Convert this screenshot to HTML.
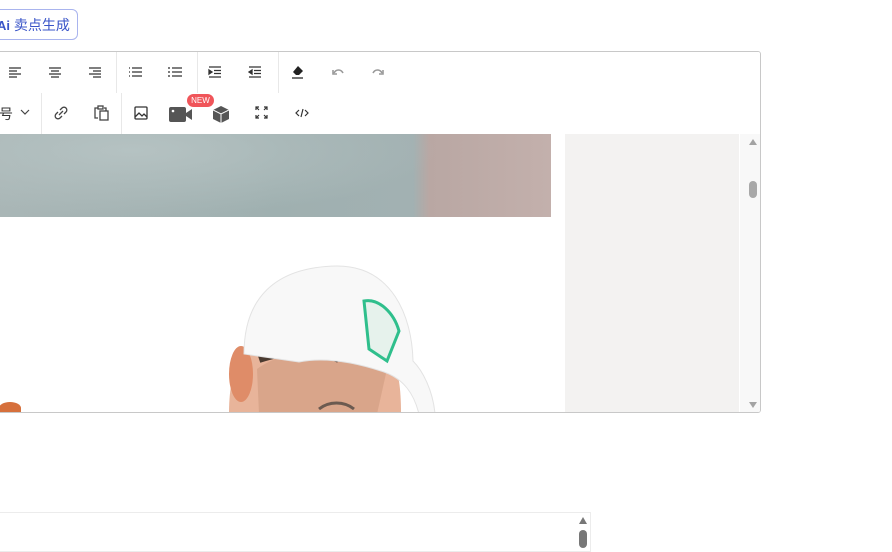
<!DOCTYPE html>
<html><head><meta charset="utf-8"><style>
body{margin:0;width:892px;height:548px;overflow:hidden;background:#fff;font-family:"Liberation Sans","Noto Sans CJK SC",sans-serif;position:relative}
.abs{position:absolute}
.btn{left:-12px;top:9px;width:90px;height:31px;border:1px solid #a9b4ee;border-radius:6px;color:#3a55c8;font-size:14px;line-height:31px;box-sizing:border-box;padding-left:8px;white-space:nowrap}
.ed{left:-2px;top:51px;width:763px;height:362px;border:1px solid #c8c8c8;box-sizing:border-box;border-radius:0 3px 3px 0;overflow:hidden}
.row{position:absolute;left:0;width:100%;height:41px;border-bottom:1px solid #ececec;background:#fff}
.sep{position:absolute;top:0;width:1px;height:41px;background:#e8e8e8}
.ic{position:absolute;top:13px}
</style></head><body>
<div class="abs btn"><b style="font-size:13px">Ai</b> 卖点生成</div>
<div class="abs ed">
 <div class="row" style="top:0">
  <svg class="ic" style="left:9px" width="14" height="14" viewBox="0 0 14 14" stroke="#333" stroke-width="1.3"><path d="M1 3h12M1 6h8M1 9h12M1 12h8"/></svg>
  <svg class="ic" style="left:49px" width="14" height="14" viewBox="0 0 14 14" stroke="#333" stroke-width="1.3"><path d="M1 3h12M3 6h8M1 9h12M3 12h8"/></svg>
  <svg class="ic" style="left:89px" width="14" height="14" viewBox="0 0 14 14" stroke="#333" stroke-width="1.3"><path d="M1 3h12M5 6h8M1 9h12M5 12h8"/></svg>
  <div class="sep" style="left:117px"></div>
  <svg class="ic" style="left:129px" width="14" height="14" viewBox="0 0 14 14" stroke="#333" stroke-width="1.3"><path d="M4 3h10M4 7h10M4 11h10M1 3h1M1 7h1M1 11h1"/></svg>
  <svg class="ic" style="left:169px" width="14" height="14" viewBox="0 0 14 14" stroke="#333" stroke-width="1.3"><path d="M4 3h10M4 7h10M4 11h10M1 2v2M1 6v2M1 10v2"/></svg>
  <div class="sep" style="left:198px"></div>
  <svg class="ic" style="left:209px" width="14" height="14" viewBox="0 0 14 14" stroke="#333" stroke-width="1.3"><path d="M1 2h12M6 5.5h7M6 8.5h7M1 12h12"/><path d="M1 5l3 2-3 2z" fill="#333"/></svg>
  <svg class="ic" style="left:249px" width="14" height="14" viewBox="0 0 14 14" stroke="#333" stroke-width="1.3"><path d="M1 2h12M6 5.5h7M6 8.5h7M1 12h12"/><path d="M4 5l-3 2 3 2z" fill="#333"/></svg>
  <div class="sep" style="left:279px"></div>
  <svg class="ic" style="left:292px" width="14" height="14" viewBox="0 0 14 14"><path d="M7 1l5 5-4 4H5L2 7z" fill="#222"/><path d="M1 13h11" stroke="#222" stroke-width="1.3"/></svg>
  <svg class="ic" style="left:332px" width="14" height="14" viewBox="0 0 14 14" fill="none" stroke="#999" stroke-width="1.6"><path d="M3 8c2-4 7-4 9 0"/><path d="M2 5v4h4" /></svg>
  <svg class="ic" style="left:372px" width="14" height="14" viewBox="0 0 14 14" fill="none" stroke="#999" stroke-width="1.6"><path d="M11 8c-2-4-7-4-9 0"/><path d="M12 5v4H8"/></svg>
 </div>
 <div class="row" style="top:41px">
  <div class="abs" style="left:0;top:11px;font-size:14px;color:#333">号</div>
  <svg class="ic" style="left:21px;top:15px" width="10" height="8" viewBox="0 0 10 8" fill="none" stroke="#444" stroke-width="1.2"><path d="M1 2l4 4 4-4"/></svg>
  <div class="sep" style="left:42px"></div>
  <svg class="ic" style="left:55px" width="14" height="14" viewBox="0 0 14 14" fill="none" stroke="#444" stroke-width="1.3"><path d="M6 4l2-2a2.5 2.5 0 0 1 4 4l-2 2M8 10l-2 2a2.5 2.5 0 0 1-4-4l2-2M5 9l4-4"/></svg>
  <svg class="ic" style="left:95px;top:12px" width="16" height="16" viewBox="0 0 16 16" fill="none" stroke="#444" stroke-width="1.3"><path d="M4 13H1V3h3M10 3h2v3"/><rect x="4" y="1" width="5" height="3"/><rect x="6" y="6" width="8" height="9"/></svg>
  <div class="sep" style="left:122px"></div>
  <svg class="ic" style="left:135px" width="14" height="14" viewBox="0 0 14 14" fill="none" stroke="#333" stroke-width="1.3"><rect x="1" y="1" width="12" height="12" rx="1"/><path d="M1 11l4-4 3 3 2-2 3 3"/></svg>
  <svg class="ic" style="left:170px;top:14px" width="24" height="15" viewBox="0 0 24 15"><rect x="0" y="0" width="17" height="15" rx="2" fill="#555"/><path d="M17 6l6-4v11l-6-4z" fill="#555"/><circle cx="4" cy="4" r="1.3" fill="#fff"/></svg>
  <div class="abs" style="left:188px;top:1px;width:27px;height:13px;border-radius:7px;background:#f0555a;color:#fff;font-size:8px;line-height:13px;text-align:center">NEW</div>
  <svg class="ic" style="left:214px;top:13px" width="16" height="17" viewBox="0 0 16 17"><path d="M8 0l8 4v9l-8 4-8-4V4z" fill="#555"/><path d="M0 4l8 4 8-4M8 8v9" stroke="#fff" stroke-width="1" fill="none"/></svg>
  <svg class="ic" style="left:256px" width="13" height="13" viewBox="0 0 13 13" fill="none" stroke="#333" stroke-width="1.2"><path d="M1 4V1h3M1 1l3 3M12 4V1H9M12 1L9 4M1 9v3h3M1 12l3-3M12 9v3H9M12 12L9 9"/></svg>
  <svg class="ic" style="left:296px" width="14" height="14" viewBox="0 0 14 14" fill="none" stroke="#333" stroke-width="1.2"><path d="M4 4L1 7l3 3M10 4l3 3-3 3M8 3L6 11"/></svg>
 </div>
 <div class="abs" style="left:0;top:82px;width:763px;height:280px;background:#fff">
  <div class="abs" style="left:0;top:0;width:552px;height:83px;background:linear-gradient(90deg,#a9b6b6 0%,#9fb0b0 50%,#a2b1b2 75%,#b9a7a3 78%,#c3b0ac 100%)"></div>
  <div class="abs" style="left:0;top:0;width:440px;height:83px;background:radial-gradient(ellipse at 30% 20%,#b5c2c2,transparent 70%)"></div>
  <div class="abs" style="left:566px;top:0;width:174px;height:280px;background:#f3f2f1"></div>
  <div class="abs" style="left:741px;top:0;width:22px;height:280px;background:#f8f8f8"></div>
  <div class="abs" style="left:750px;top:5px;width:0;height:0;border:4px solid transparent;border-bottom:6px solid #a3a3a3;border-top:0"></div>
  <div class="abs" style="left:750px;top:47px;width:8px;height:17px;border-radius:4px;background:#a8a8a8"></div>
  <div class="abs" style="left:750px;top:268px;width:0;height:0;border:4px solid transparent;border-top:6px solid #a3a3a3;border-bottom:0"></div>
  <svg class="abs" style="left:220px;top:125px" width="230" height="155" viewBox="0 0 230 155">
   <path d="M10 155c0-30 5-50 20-65h140c10 20 12 40 12 65z" fill="#e8b49a"/>
   <ellipse cx="22" cy="115" rx="12" ry="28" fill="#df8c68"/>
   <path d="M38 110c20-15 60-25 100-15l30 15-10 45H40z" fill="#d9a58a"/>
   <path d="M40 100c30-10 60-10 80 0" stroke="#4a3a30" stroke-width="8" fill="none"/>
   <path d="M25 95C25 40 55 8 118 7c55 0 75 50 76 95 10 10 20 30 22 53h-16c-5-20-15-35-35-42-30-10-60-15-85-10z" fill="#f8f8f8" stroke="#e3e3e3"/>
   <path d="M145 42c15-3 30 12 35 30l-12 30-18-12z" fill="#e6f2ec" stroke="#2fbf8c" stroke-width="3"/>
   <path d="M100 150c10-8 25-8 35 0" stroke="#6b5a50" stroke-width="3" fill="none"/>
  </svg>
  <div class="abs" style="left:0;top:268px;width:22px;height:12px;border-radius:50% 50% 0 0;background:#d6703c"></div>
 </div>
</div>
<div class="abs" style="left:-2px;top:512px;width:593px;height:40px;border:1px solid #ececec;box-sizing:border-box"></div>
<div class="abs" style="left:579px;top:517px;width:0;height:0;border:4px solid transparent;border-bottom:7px solid #777;border-top:0"></div>
<div class="abs" style="left:579px;top:530px;width:8px;height:18px;border-radius:4px;background:#777"></div>
</body></html>
